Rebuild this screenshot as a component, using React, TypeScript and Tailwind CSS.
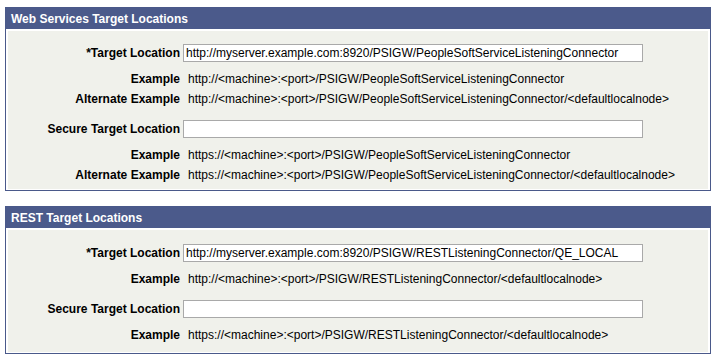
import React from 'react';

type Row =
  | { kind: 'input'; label: string; value: string; gap: number }
  | { kind: 'text'; label: string; value: string; gap: number };

function Field({ row }: { row: Row }) {
  return (
    <div className="flex h-[20px] items-center" style={{ marginTop: row.gap }}>
      <div className="w-[172px] shrink-0 text-right font-bold text-black">{row.label}</div>
      {row.kind === 'input' ? (
        <div className="ml-[3px] flex h-[18px] w-[460px] items-center border border-[#a9a9a9] bg-white pl-[2px] text-black">
          {row.value}
        </div>
      ) : (
        <div className="ml-[8px] whitespace-nowrap text-black">{row.value}</div>
      )}
    </div>
  );
}

function GroupBox({ title, rows, pb }: { title: string; rows: Row[]; pb: string }) {
  return (
    <div className="ml-[5px] w-[706px] border border-[#4a598a] bg-white">
      <div className="flex h-[21px] items-center bg-[#4b5a8b] pl-[5px] font-bold text-white">{title}</div>
      <div className={`mx-[2px] mt-[2px] mb-[1px] bg-[#f0f1eb] pt-[12px] ${pb}`}>
        {rows.map((r, i) => (
          <Field key={i} row={r} />
        ))}
      </div>
    </div>
  );
}

export default function App() {
  const ws: Row[] = [
    { kind: 'input', label: '*Target Location', value: 'http://myserver.example.com:8920/PSIGW/PeopleSoftServiceListeningConnector', gap: 0 },
    { kind: 'text', label: 'Example', value: 'http://<machine>:<port>/PSIGW/PeopleSoftServiceListeningConnector', gap: 6 },
    { kind: 'text', label: 'Alternate Example', value: 'http://<machine>:<port>/PSIGW/PeopleSoftServiceListeningConnector/<defaultlocalnode>', gap: 0 },
    { kind: 'input', label: 'Secure Target Location', value: '', gap: 10 },
    { kind: 'text', label: 'Example', value: 'https://<machine>:<port>/PSIGW/PeopleSoftServiceListeningConnector', gap: 6 },
    { kind: 'text', label: 'Alternate Example', value: 'https://<machine>:<port>/PSIGW/PeopleSoftServiceListeningConnector/<defaultlocalnode>', gap: 0 },
  ];
  const rest: Row[] = [
    { kind: 'input', label: '*Target Location', value: 'http://myserver.example.com:8920/PSIGW/RESTListeningConnector/QE_LOCAL', gap: 1 },
    { kind: 'text', label: 'Example', value: 'http://<machine>:<port>/PSIGW/RESTListeningConnector/<defaultlocalnode>', gap: 6 },
    { kind: 'input', label: 'Secure Target Location', value: '', gap: 10 },
    { kind: 'text', label: 'Example', value: 'https://<machine>:<port>/PSIGW/RESTListeningConnector/<defaultlocalnode>', gap: 6 },
  ];
  return (
    <div className="h-[361px] w-[717px] bg-white pt-[7px] font-['Liberation_Sans',Arial,sans-serif] text-[12px] leading-none">
      <GroupBox title="Web Services Target Locations" rows={ws} pb="pb-[4px]" />
      <div className="h-[15px]" />
      <GroupBox title="REST Target Locations" rows={rest} pb="pb-[7px]" />
    </div>
  );
}
